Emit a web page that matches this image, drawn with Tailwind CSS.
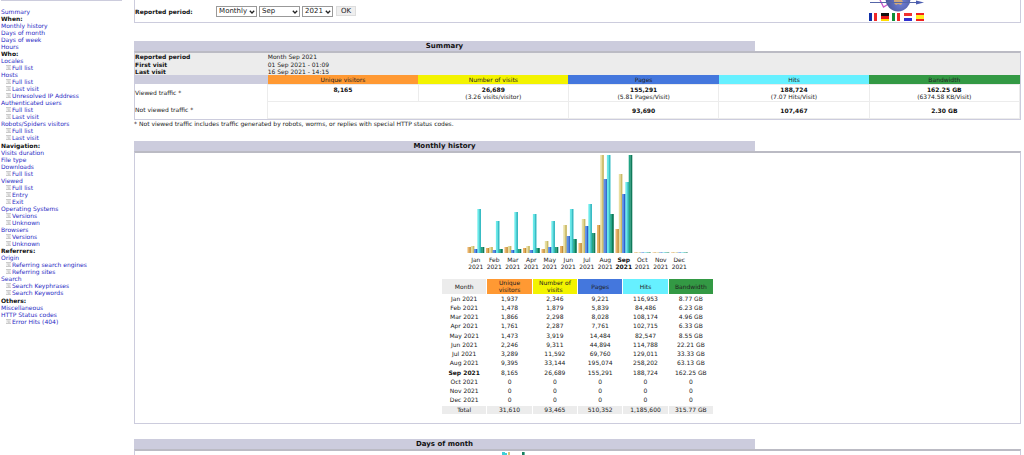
<!DOCTYPE html>
<html lang="en">
<head>
<meta charset="utf-8">
<title>Statistics</title>
<script src="https://cdn.jsdelivr.net/npm/@tailwindcss/browser@4"></script>
</head>
<body class="flex h-screen overflow-hidden bg-white font-['DejaVu_Sans',sans-serif] text-[6px] leading-[7px] text-[#222]">
<svg class="hidden" aria-hidden="true">
  <symbol id="doc" viewBox="0 0 6 6"><rect width="6" height="6" fill="#eeeeee"/><path d="M0 .5h6M1.5 2.5h3M2.500 4h2M0 5.5h6" stroke="#b4b4b4" stroke-width=".8"/></symbol>
  <symbol id="down" viewBox="0 0 6 4"><path d="M.8.8 3 3 5.2.8" fill="none" stroke="#222" stroke-width="1.3"/></symbol>
</svg>

<nav class="w-[13%] shrink-0 pl-px [&_a]:text-[#2a2ac4] [&_h2]:font-bold [&_h2]:text-[#111] [&_li_svg]:mr-px [&_li_svg]:size-[5px] [&_li]:flex [&_li]:items-center [&_ul]:pl-[5px] [&>a]:block">
  <div class="mr-[11px] h-[8px] border-t border-[#ccccdd]"></div>
  <a href="#">Summary</a>
  <h2>When:</h2>
  <a href="#">Monthly history</a>
  <a href="#">Days of month</a>
  <a href="#">Days of week</a>
  <a href="#">Hours</a>
  <h2>Who:</h2>
  <a href="#">Locales</a>
  <ul><li><svg><use href="#doc"/></svg><a href="#">Full list</a></li></ul>
  <a href="#">Hosts</a>
  <ul>
    <li><svg><use href="#doc"/></svg><a href="#">Full list</a></li>
    <li><svg><use href="#doc"/></svg><a href="#">Last visit</a></li>
    <li><svg><use href="#doc"/></svg><a href="#">Unresolved IP Address</a></li>
  </ul>
  <a href="#">Authenticated users</a>
  <ul>
    <li><svg><use href="#doc"/></svg><a href="#">Full list</a></li>
    <li><svg><use href="#doc"/></svg><a href="#">Last visit</a></li>
  </ul>
  <a href="#">Robots/Spiders visitors</a>
  <ul>
    <li><svg><use href="#doc"/></svg><a href="#">Full list</a></li>
    <li><svg><use href="#doc"/></svg><a href="#">Last visit</a></li>
  </ul>
  <h2 class="mt-px">Navigation:</h2>
  <a href="#">Visits duration</a>
  <a href="#">File type</a>
  <a href="#">Downloads</a>
  <ul><li><svg><use href="#doc"/></svg><a href="#">Full list</a></li></ul>
  <a href="#">Viewed</a>
  <ul>
    <li><svg><use href="#doc"/></svg><a href="#">Full list</a></li>
    <li><svg><use href="#doc"/></svg><a href="#">Entry</a></li>
    <li><svg><use href="#doc"/></svg><a href="#">Exit</a></li>
  </ul>
  <a href="#">Operating Systems</a>
  <ul>
    <li><svg><use href="#doc"/></svg><a href="#">Versions</a></li>
    <li><svg><use href="#doc"/></svg><a href="#">Unknown</a></li>
  </ul>
  <a href="#">Browsers</a>
  <ul>
    <li><svg><use href="#doc"/></svg><a href="#">Versions</a></li>
    <li><svg><use href="#doc"/></svg><a href="#">Unknown</a></li>
  </ul>
  <h2>Referrers:</h2>
  <a href="#">Origin</a>
  <ul>
    <li><svg><use href="#doc"/></svg><a href="#">Referring search engines</a></li>
    <li><svg><use href="#doc"/></svg><a href="#">Referring sites</a></li>
  </ul>
  <a href="#">Search</a>
  <ul>
    <li><svg><use href="#doc"/></svg><a href="#">Search Keyphrases</a></li>
    <li><svg><use href="#doc"/></svg><a href="#">Search Keywords</a></li>
  </ul>
  <h2 class="mt-px">Others:</h2>
  <a href="#">Miscellaneous</a>
  <a href="#">HTTP Status codes</a>
  <ul><li><svg><use href="#doc"/></svg><a href="#">Error Hits (404)</a></li></ul>
</nav>

<main class="flex min-w-0 flex-1 flex-col pr-[3px] pl-px">
  <header class="flex h-[23px] shrink-0 justify-between border-x border-b border-[#ccccdd]">
    <form class="flex items-center text-[7px]">
      <label for="month" class="w-[81px] text-[6px] font-bold text-[#111]">Reported period:</label>
      <div class="flex items-center gap-[2px]">
        <div class="relative">
          <select aria-label="Period" class="block h-[11px] w-[41px] appearance-none border border-[#999] bg-white pl-[2px] leading-[9px]"><option>Monthly</option></select>
          <svg class="pointer-events-none absolute top-[4px] right-[2px] h-[4px] w-[6px]"><use href="#down"/></svg>
        </div>
        <div class="relative">
          <select id="month" class="block h-[11px] w-[41px] appearance-none border border-[#999] bg-white pl-[2px] leading-[9px]"><option>Sep</option></select>
          <svg class="pointer-events-none absolute top-[4px] right-[2px] h-[4px] w-[6px]"><use href="#down"/></svg>
        </div>
        <div class="relative">
          <select aria-label="Year" class="block h-[11px] w-[31px] appearance-none border border-[#999] bg-white pl-[2px] leading-[9px]"><option>2021</option></select>
          <svg class="pointer-events-none absolute top-[4px] right-[2px] h-[4px] w-[6px]"><use href="#down"/></svg>
        </div>
        <button type="button" class="ml-px h-[10px] w-[20px] border border-[#ddd] bg-[#efefef] leading-[8px]">OK</button>
      </div>
    </form>
    <div class="mr-[95px] flex w-[56px] flex-col">
      <svg class="h-[13px] w-full" viewBox="0 0 56 13">
        <defs><radialGradient id="globe" cx=".6" cy=".65" r=".6"><stop offset="0" stop-color="#7080d8"/><stop offset="1" stop-color="#4a5596"/></radialGradient></defs>
        <path d="M11 0l3.500 7 5-3" fill="none" stroke="#c858c8" stroke-width="1.300"/>
        <circle cx="29" cy="-1" r="12.500" fill="url(#globe)"/>
        <path d="M25 0h8l1 2-2 3-3-1-2 1-2-2z" fill="#d0a878"/>
        <path d="M1 2.500h47" stroke="#5566a8"/><path d="M47 .5l8 2-8 2z" fill="#4a5cb0"/>
      </svg>
      <svg class="h-[8px] w-full" viewBox="0 0 56 8">
        <path d="M0 0h3v8H0z" fill="#1030a8"/><path d="M5 0h3v8H5z" fill="#f02828"/>
        <path d="M12 0h8v3h-8z" fill="#111"/><path d="M12 3h8v3h-8z" fill="#e81818"/><path d="M12 6h8v2h-8z" fill="#fd0"/>
        <path d="M23 0h3v8h-3z" fill="#109038"/><path d="M28 0h3v8h-3z" fill="#f02828"/>
        <path d="M35 0h8v3h-8z" fill="#f03030"/><path d="M35 5h8v3h-8z" fill="#3030d0"/>
        <path d="M47 0h8v8h-8z" fill="#f02020"/><path d="M47 2h8v4h-8z" fill="#fe2"/>
      </svg>
    </div>
  </header>

  <section class="mt-[18px] shrink-0">
    <h2 class="h-[10px] w-[70%] bg-[#ccccdd] text-center text-[7px] leading-[10px] font-bold text-[#111]">Summary</h2>
    <div class="border border-t-2 border-[#ccccdd] border-t-[#bbbbc4]">
      <table class="w-full table-fixed border-collapse text-center">
        <colgroup><col class="w-[15%]"><col><col><col><col><col></colgroup>
        <tbody class="bg-[#ececec] text-left [&_th]:font-bold [&_th]:text-[#111]">
          <tr class="h-[7px]"><th>Reported period</th><td colspan="5">Month Sep 2021</td></tr>
          <tr class="h-[8px]"><th>First visit</th><td colspan="5">01 Sep 2021 - 01:09</td></tr>
          <tr class="h-[7px]"><th>Last visit</th><td colspan="5">16 Sep 2021 - 14:15</td></tr>
        </tbody>
        <tbody class="[&_b]:block [&_b]:text-[#111] [&_td]:border [&_td]:border-[#ececec] [&_td]:align-top [&_th]:font-normal">
          <tr class="h-[9px]"><th class="bg-[#ccccdd]"></th><th class="bg-[#ff9933]">Unique visitors</th><th class="bg-[#f3f300]">Number of visits</th><th class="bg-[#4477dd]">Pages</th><th class="bg-[#66f0ff]">Hits</th><th class="bg-[#339944]">Bandwidth</th></tr>
          <tr class="h-[17px]"><th class="text-left">Viewed traffic *</th><td class="pt-px"><b>8,165</b></td><td class="pt-px"><b>26,689</b>(3.26 visits/visitor)</td><td class="pt-px"><b>155,291</b>(5.81 Pages/Visit)</td><td class="pt-px"><b>188,724</b>(7.07 Hits/Visit)</td><td class="pt-px"><b>162.25 GB</b>(6374.58 KB/Visit)</td></tr>
          <tr class="h-[17px]"><th class="text-left">Not viewed traffic *</th><td colspan="2"></td><td class="pt-[5px]"><b>93,690</b></td><td class="pt-[5px]"><b>107,467</b></td><td class="pt-[5px]"><b>2.30 GB</b></td></tr>
        </tbody>
      </table>
    </div>
    <p>* Not viewed traffic includes traffic generated by robots, worms, or replies with special HTTP status codes.</p>
  </section>

  <section class="mt-[14px] shrink-0">
    <h2 class="h-[10px] w-[70%] bg-[#ccccdd] text-center text-[7px] leading-[10px] font-bold text-[#111]">Monthly history</h2>
    <div class="flex flex-col items-center border border-t-2 border-[#ccccdd] border-t-[#bbbbc4] pt-px pb-[8px]">
      <svg id="chart" class="h-[99px] w-[222px]" viewBox="0 0 222 99" role="img" aria-label="Monthly history chart"></svg>
      <div id="months" class="mt-[3px] grid w-[222px] grid-cols-12 text-center"></div>
      <table class="mt-[8px] h-[137px] w-[273px] table-fixed border-separate border-spacing-px text-center leading-[8px] [&_th]:p-0 [&_th]:font-normal">
        <thead><tr class="h-[15px] leading-[7px]"><th class="bg-[#ececec]">Month</th><th class="bg-[#ff9933]">Unique visitors</th><th class="bg-[#f3f300]">Number of visits</th><th class="bg-[#4477dd]">Pages</th><th class="bg-[#66f0ff]">Hits</th><th class="bg-[#339944]">Bandwidth</th></tr></thead>
        <tbody>
          <tr><td>Jan 2021</td><td>1,937</td><td>2,346</td><td>9,221</td><td>116,953</td><td>8.77 GB</td></tr>
          <tr><td>Feb 2021</td><td>1,478</td><td>1,879</td><td>5,839</td><td>84,486</td><td>6.23 GB</td></tr>
          <tr><td>Mar 2021</td><td>1,866</td><td>2,298</td><td>8,028</td><td>108,174</td><td>4.96 GB</td></tr>
          <tr><td>Apr 2021</td><td>1,761</td><td>2,287</td><td>7,761</td><td>102,715</td><td>6.33 GB</td></tr>
          <tr><td>May 2021</td><td>1,473</td><td>3,919</td><td>14,484</td><td>82,547</td><td>8.55 GB</td></tr>
          <tr><td>Jun 2021</td><td>2,246</td><td>9,311</td><td>44,894</td><td>114,788</td><td>22.21 GB</td></tr>
          <tr><td>Jul 2021</td><td>3,289</td><td>11,592</td><td>69,760</td><td>129,011</td><td>33.33 GB</td></tr>
          <tr><td>Aug 2021</td><td>9,395</td><td>33,144</td><td>195,074</td><td>258,202</td><td>63.13 GB</td></tr>
          <tr><td class="font-bold text-[#111]">Sep 2021</td><td>8,165</td><td>26,689</td><td>155,291</td><td>188,724</td><td>162.25 GB</td></tr>
          <tr><td>Oct 2021</td><td>0</td><td>0</td><td>0</td><td>0</td><td>0</td></tr>
          <tr><td>Nov 2021</td><td>0</td><td>0</td><td>0</td><td>0</td><td>0</td></tr>
          <tr><td>Dec 2021</td><td>0</td><td>0</td><td>0</td><td>0</td><td>0</td></tr>
        </tbody>
        <tfoot><tr class="[&_td]:bg-[#ececec]"><td>Total</td><td>31,610</td><td>93,465</td><td>510,352</td><td>1,185,600</td><td>315.77 GB</td></tr></tfoot>
      </table>
    </div>
  </section>

  <section class="mt-[15px] flex min-h-0 flex-1 flex-col">
    <h2 class="h-[10px] w-[70%] shrink-0 bg-[#ccccdd] text-center text-[7px] leading-[10px] font-bold text-[#111]">Days of month</h2>
    <div class="flex min-h-0 flex-1 justify-center overflow-hidden border border-t-2 border-b-0 border-[#ccccdd] border-t-[#bbbbc4]">
      <svg class="h-full w-[152px]" viewBox="0 0 152 98" preserveAspectRatio="xMinYMin slice"><path d="M0 1h3v97H0zM3 2h2v96H3z" fill="#40d0d8"/><path d="M6 1h2v97H6z" fill="#d8c878"/><path d="M20 1h2v97h-2z" fill="#188060"/><path d="M22 1h1v97h-1z" fill="#66b8a0"/></svg>
    </div>
  </section>
</main>

<script>
const names = ['Jan','Feb','Mar','Apr','May','Jun','Jul','Aug','Sep','Oct','Nov','Dec'];
const heights = [[6,7,4,44,6],[5,6,3,32,4],[6,7,3,41,4],[5,7,3,39,5],[4,12,6,32,6],[7,28,17,44,14],[10,34,27,49,20],[28,98,74,98,39],[24,79,59,71,98],[.5,.5,.5,.5,.5],[.5,.5,.5,.5,.5],[.5,.5,.5,.5,.5]];
const shades = [['#ecb468','#c48c38'],['#e8dea0','#cabb68'],['#5c90ea','#3060c8'],['#68eaea','#38bcc4'],['#22a584','#107a5a']];
let bars = '', labels = '';
names.forEach((n, i) => {
  const x0 = 0.5 + i * 18.5;
  heights[i].forEach((h, k) => {
    const x = x0 + k * 3.3;
    bars += `<rect x="${x}" y="${99 - h}" width="2" height="${h}" fill="${shades[k][0]}"/><rect x="${x + 1.8}" y="${99 - h}" width="1.8" height="${h}" fill="${shades[k][1]}"/>`;
  });
  labels += `<div class="${n === 'Sep' ? 'font-bold text-[#111]' : ''}">${n}<br>2021</div>`;
});
document.getElementById('chart').innerHTML = bars;
document.getElementById('months').innerHTML = labels;
</script>
</body>
</html>
